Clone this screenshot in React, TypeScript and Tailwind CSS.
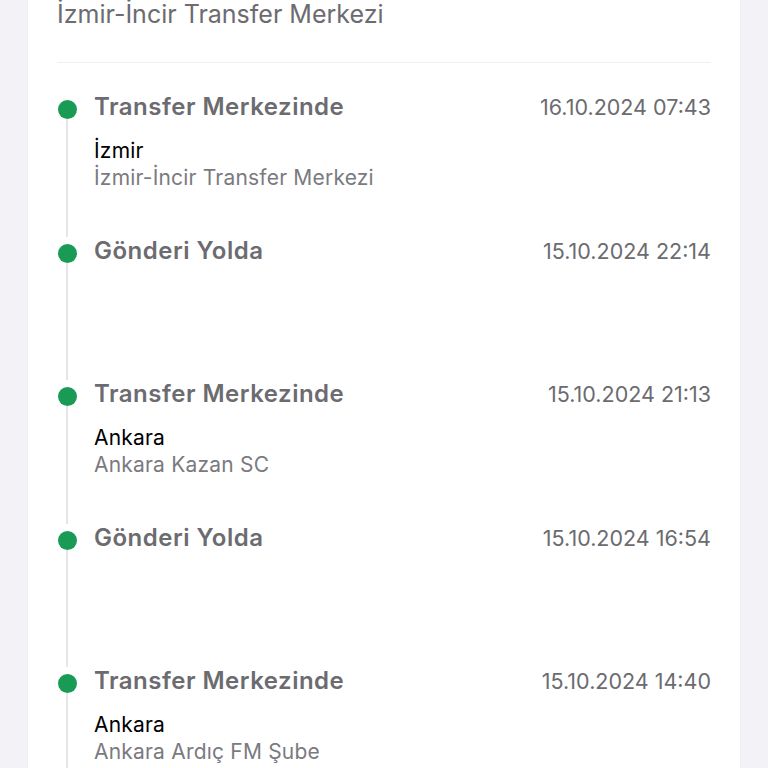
const events = [
  { title: "Transfer Merkezinde", date: "16.10.2024 07:43", city: "İzmir", place: "İzmir-İncir Transfer Merkezi" },
  { title: "Gönderi Yolda", date: "15.10.2024 22:14", city: "", place: "" },
  { title: "Transfer Merkezinde", date: "15.10.2024 21:13", city: "Ankara", place: "Ankara Kazan SC" },
  { title: "Gönderi Yolda", date: "15.10.2024 16:54", city: "", place: "" },
  { title: "Transfer Merkezinde", date: "15.10.2024 14:40", city: "Ankara", place: "Ankara Ardıç FM Şube" },
];

const font = { fontFamily: "Inter, 'Noto Sans', sans-serif" };

export default function App() {
  return (
    <div className="h-[768px] w-[768px] overflow-hidden bg-[#f2f2f7] px-[28px]" style={font}>
      <div className="h-full bg-white px-[29px] shadow-[0_0_2px_rgba(0,0,0,0.04)]">
        {/* Header remainder */}
        <div className="text-[25px] leading-[28px] text-[#6b6b70]">İzmir-İncir Transfer Merkezi</div>
        <div className="mt-[34px] border-t border-[#efeff2]" />

        {/* Timeline */}
        <div className="pt-[30px]">
          {events.map((e, i) => (
            <div key={i} className="flex h-[143.5px]">
              <div className="flex w-[20px] flex-col items-center">
                <div className="mt-[7px] h-[19px] w-[19px] shrink-0 rounded-full bg-[#1a9b55]" />
                <div className="w-[2px] flex-1 bg-[#e6e6ea]" />
              </div>
              <div className="ml-[17px] flex-1">
                <div className="flex items-center justify-between">
                  <span className="text-[24px] font-semibold leading-[28px] tracking-[0.5px] text-[#6b6b70]">{e.title}</span>
                  <span className="text-[21.5px] leading-[28px] text-[#6b6b70]">{e.date}</span>
                </div>
                {e.city && (
                  <>
                    <div className="mt-[17px] text-[21px] leading-[26px] tracking-[0.2px] text-black">{e.city}</div>
                    <div className="text-[21px] leading-[27px] tracking-[0.2px] text-[#7a7a7f]">{e.place}</div>
                  </>
                )}
              </div>
            </div>
          ))}
        </div>
      </div>
    </div>
  );
}
